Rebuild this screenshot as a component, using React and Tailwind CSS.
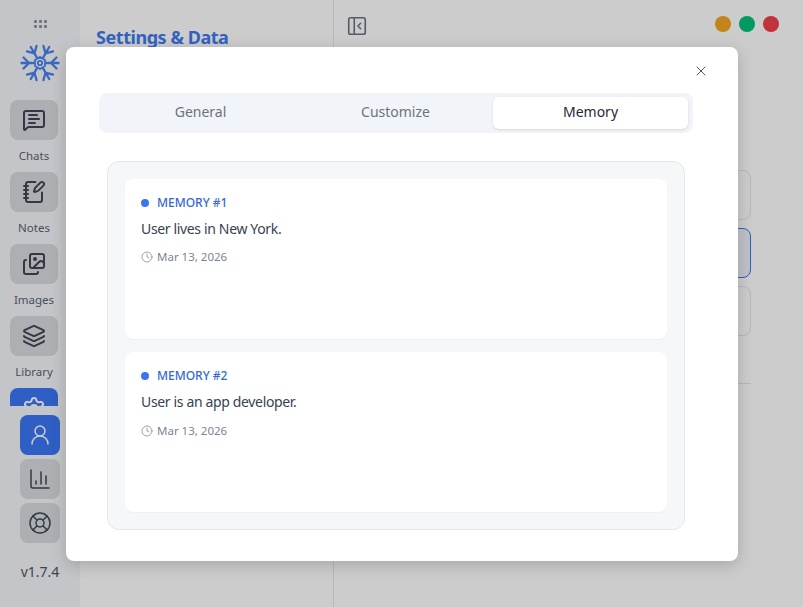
import React from "react";
import { MessageSquareText, NotebookPen, Images, Layers, Settings, UserRound, ChartColumn, LifeBuoy, Clock, X, PanelLeftClose } from "lucide-react";

const font = "font-['Noto_Sans','Open_Sans',sans-serif]";

function Logo() {
  return (
    <svg width="40" height="40" viewBox="0 0 40 40" fill="none" stroke="#4a82ee" strokeWidth="2.3" strokeLinecap="round" strokeLinejoin="round">
      {[30, 90, 150, 210, 270, 330].map((a) => (
        <g key={a} transform={`rotate(${a} 20 20)`}>
          <path d="M20 13.5 V1.5 M20 9 L14.5 3.5 M20 9 L25.5 3.5" />
        </g>
      ))}
      <path d="M20 14 L25 17 V23 L20 26 L15 23 V17 Z" strokeWidth="1.8" />
      <circle cx="20" cy="20" r="2.2" strokeWidth="1.8" />
    </svg>
  );
}

function NavItem({ icon: Icon, label }) {
  return (
    <div className="flex flex-col items-center shrink-0">
      <div className="w-12 h-10 rounded-lg bg-[#d9dbe0] flex items-center justify-center text-[#3f4856]">
        <Icon size={24} strokeWidth={2} />
      </div>
      <span className="text-[11.5px] leading-4 mt-2 mb-2 text-[#5b6472]">{label}</span>
    </div>
  );
}

function Memory({ n, text, dateGap }) {
  return (
    <div className="h-[160px] bg-white rounded-lg shadow-[0_1px_2px_rgba(0,0,0,0.04)] p-4">
      <div className="flex items-center gap-2 h-4">
        <span className="w-2 h-2 rounded-full bg-[#3b76f0]" />
        <span className="text-xs leading-4 font-medium text-[#3567d6]">MEMORY #{n}</span>
      </div>
      <p className="text-sm leading-5 text-[#374151] mt-[8px] tracking-[-0.35px]">{text}</p>
      <div className={`flex items-center gap-[4px] ${dateGap} text-[11.5px] leading-4 text-[#7b8494]`}>
        <Clock size={12} strokeWidth={1.5} />
        <span>Mar 13, 2026</span>
      </div>
    </div>
  );
}

export default function App() {
  return (
    <div className={`relative h-screen w-full overflow-hidden flex bg-[#ffffff] ${font}`}>
      <aside className="w-20 shrink-0 h-full bg-[#f5f7fa] flex flex-col items-center pt-5">
        <div className="grid grid-cols-3 gap-[2px] w-[13px] h-[8px] mb-[15px]">
          {[0, 1, 2, 3, 4, 5].map((i) => (
            <span key={i} className="w-[3px] h-[3px] rounded-[1px] bg-[#8b909a]" />
          ))}
        </div>
        <Logo />
        <div className="h-[306px] mt-[17px] self-start ml-[10px] overflow-hidden flex flex-col items-center">
          <NavItem icon={MessageSquareText} label="Chats" />
          <NavItem icon={NotebookPen} label="Notes" />
          <NavItem icon={Images} label="Images" />
          <NavItem icon={Layers} label="Library" />
          <div className="w-12 h-10 rounded-lg bg-[#3b76f6] flex items-center justify-center text-white shrink-0">
            <Settings size={24} strokeWidth={2} />
          </div>
        </div>
        <div className="flex flex-col gap-1 mt-[9px]">
          <div className="w-10 h-10 rounded-lg bg-[#3b76f6] flex items-center justify-center text-white">
            <UserRound size={24} strokeWidth={1.5} />
          </div>
          <div className="w-10 h-10 rounded-lg bg-[#d9dbe0] flex items-center justify-center text-[#3f4856]">
            <ChartColumn size={24} strokeWidth={1.5} />
          </div>
          <div className="w-10 h-10 rounded-lg bg-[#d9dbe0] flex items-center justify-center text-[#3f4856]">
            <LifeBuoy size={24} strokeWidth={1.5} />
          </div>
        </div>
        <span className="mt-[19px] text-sm leading-5 text-[#4b5563]">v1.7.4</span>
      </aside>

      <section className="w-[254px] shrink-0 h-full bg-[#ffffff] border-r border-[#e5e7eb] px-4 pt-[25px]">
        <h1 className="text-lg leading-6 font-bold text-[#3f7bf2] tracking-[-0.45px]">Settings &amp; Data</h1>
      </section>

      <main className="flex-1 h-full bg-white relative pt-[15px] pl-[12px] pr-[52px]">
        <div className="flex items-center justify-between text-[#6b7280]">
          <PanelLeftClose size={22} strokeWidth={1.75} />
        </div>
        <div className="mt-[133px] flex flex-col gap-[8px] pl-[42px]">
          <div className="h-[50px] rounded-lg border border-[#e5e7eb]" />
          <div className="h-[50px] rounded-lg border border-[#3b76f6] bg-[#eef3fb]" />
          <div className="h-[50px] rounded-lg border border-[#e5e7eb]" />
        </div>
        <div className="mt-[47px] ml-[42px] border-t border-[#e5e7eb]" />
        <div className="absolute top-4 right-6 flex gap-2">
          <span className="w-4 h-4 rounded-full bg-[#f5a623]" />
          <span className="w-4 h-4 rounded-full bg-[#00c27a]" />
          <span className="w-4 h-4 rounded-full bg-[#f23f4a]" />
        </div>
      </main>

      <div className="absolute inset-0 bg-black/20" />

      <div className="absolute left-[66px] top-[47px] w-[672px] h-[514px] rounded-lg bg-white shadow-[0_4px_16px_rgba(0,0,0,0.18)] pt-[46px] px-[33px]">
        <X size={16} strokeWidth={1.5} className="absolute top-4 right-[29px] text-[#4b5563]" />
        <div className="h-10 w-[594px] rounded-lg bg-[#f1f5f9] p-1 flex">
          <div className="w-[195px] flex items-center justify-center text-sm text-[#6b7280] pb-[2px]">General</div>
          <div className="w-[195px] flex items-center justify-center text-sm text-[#6b7280] pb-[2px]">Customize</div>
          <div className="w-[195px] flex items-center justify-center text-sm text-[#1f2937] pb-[2px] bg-white rounded-md shadow-sm">Memory</div>
        </div>
        <div className="mt-7 ml-2 w-[578px] h-[369px] rounded-xl border border-[#e5e7eb] bg-[#f6f7f9] p-[17px] flex flex-col gap-[13px]">
          <Memory n={1} text="User lives in New York." dateGap="mt-[9.5px]" />
          <Memory n={2} text="User is an app developer." dateGap="mt-[10.5px]" />
        </div>
      </div>
    </div>
  );
}
